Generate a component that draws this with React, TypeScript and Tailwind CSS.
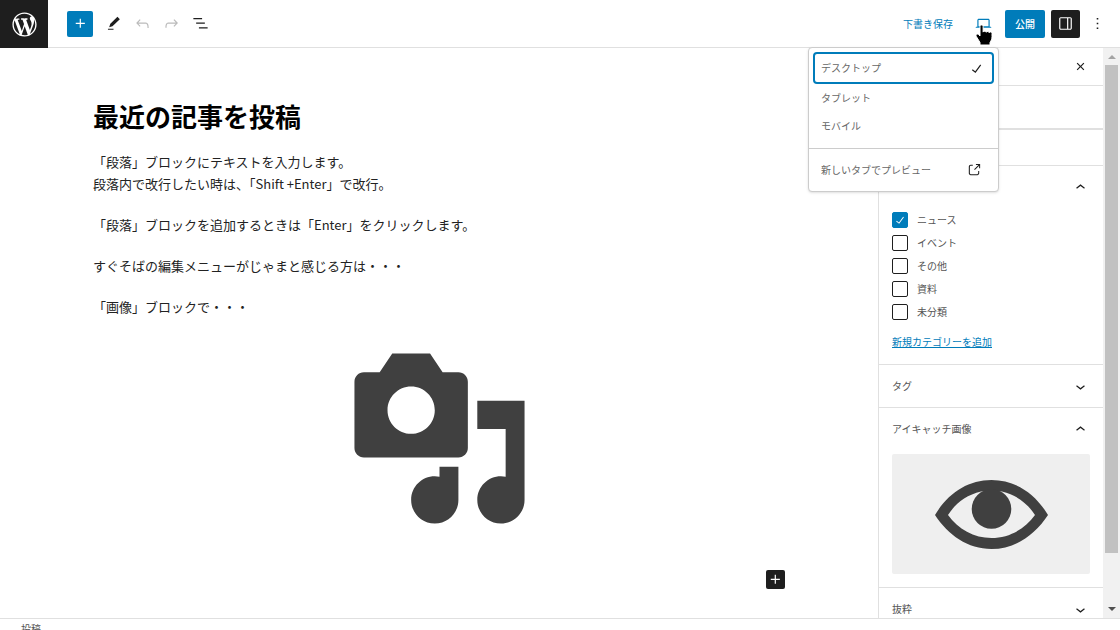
import React from 'react';

const icons = {
  wordpress:
    'M20 10c0-5.51-4.49-10-10-10C4.48 0 0 4.49 0 10c0 5.52 4.48 10 10 10 5.51 0 10-4.48 10-10zM7.78 15.37L4.37 6.22c.55-.02 1.17-.08 1.17-.08.5-.06.44-1.13-.06-1.11 0 0-1.45.11-2.37.11-.18 0-.37 0-.58-.01C4.12 2.69 6.87 1.11 10 1.11c2.33 0 4.45.87 6.05 2.34-.68-.11-1.65.39-1.65 1.58 0 .74.45 1.36.9 2.1.35.61.55 1.36.55 2.46 0 1.49-1.4 5-1.4 5l-3.03-8.37c.54-.02.82-.17.82-.17.5-.05.44-1.25-.06-1.22 0 0-1.44.12-2.38.12-.87 0-2.33-.12-2.33-.12-.5-.03-.56 1.2-.06 1.22l.92.08 1.26 3.41zM17.41 10c.24-.64.74-1.87.43-4.25.7 1.29 1.05 2.71 1.05 4.25 0 3.29-1.73 6.24-4.4 7.78.97-2.59 1.94-5.2 2.92-7.78zM6.1 18.09C3.12 16.65 1.11 13.53 1.11 10c0-1.3.23-2.48.72-3.59C3.25 10.3 4.67 14.2 6.1 18.09zm4.03-6.63l2.58 6.98c-.86.29-1.76.45-2.71.45-.79 0-1.57-.11-2.29-.33.81-2.38 1.62-4.74 2.42-7.1z',
  plus: 'M11 12.5V17.5H12.5V12.5H17.5V11H12.5V6H11V11H6V12.5H11Z',
  edit: 'M20 6.5l-3-3-9 8.8-1.5 4.4 4.2-1.2L20 6.5ZM12 18.5H5V20h7v-1.5Z',
  undo: 'M18.3 11.7c-.6-.6-1.4-.9-2.3-.9H6.7l2.9-3.3-1.1-1-4.5 5L8.5 16l1-1-2.7-2.7H16c.5 0 .9.2 1.3.5 1 1 1 3.4 1 4.5v.3h1.5v-.2c0-1.5 0-4.3-1.5-5.7z',
  redo: 'M15.6 6.5l-1.1 1 2.9 3.3H8c-.9 0-1.7.3-2.3.9-1.4 1.5-1.4 4.2-1.4 5.6v.2h1.5v-.3c0-1.1 0-3.5 1-4.5.3-.3.7-.5 1.3-.5h9.2L14.5 15l1.1 1.1 4.6-4.6-4.6-5z',
  listView: 'M3 5h11v1.6H3V5Zm3.5 5.7h11v1.6h-11v-1.6ZM21 16.6H10v1.6h11v-1.6Z',
  laptop:
    'M20.5 16h-.7V8c0-1.1-.9-2-2-2H6.2c-1.1 0-2 .9-2 2v8h-.7c-.8 0-1.5.7-1.5 1.5h20c0-.8-.7-1.5-1.5-1.5zM5.7 8c0-.3.2-.5.5-.5h11.6c.3 0 .5.2.5.5v7.6H5.7V8z',
  drawer:
    'M18 4H6c-1.1 0-2 .9-2 2v12c0 1.1.9 2 2 2h12c1.1 0 2-.9 2-2V6c0-1.1-.9-2-2-2zm-4 14.5H6c-.3 0-.5-.2-.5-.5V6c0-.3.2-.5.5-.5h8v13zm4.5-.5c0 .3-.2.5-.5.5h-2.5v-13H18c.3 0 .5.2.5.5v12z',
  more: 'M13 19h-2v-2h2v2zm0-6h-2v-2h2v2zm0-6h-2V5h2v2z',
  check: 'M16.7 7.1l-6.3 8.5-3.3-2.5-.9 1.2 4.5 3.4L17.9 8z',
  external:
    'M18.2 17c0 .7-.6 1.2-1.2 1.2H7c-.7 0-1.2-.6-1.2-1.2V7c0-.7.6-1.2 1.2-1.2h3.2V4.2H7C5.5 4.2 4.2 5.5 4.2 7v10c0 1.5 1.2 2.8 2.8 2.8h10c1.5 0 2.8-1.2 2.8-2.8v-3.6h-1.5V17zM14.9 3v1.5h3.7l-6.4 6.4 1.1 1.1 6.4-6.4v3.7h1.5V3h-6.3z',
  close:
    'M12 13.06l3.712 3.713 1.061-1.06L13.061 12l3.712-3.712-1.06-1.06L12 10.938 8.288 7.227l-1.061 1.06L10.939 12l-3.712 3.712 1.06 1.061L12 13.061z',
  down: 'M17.5 11.6L12 16l-5.5-4.4.9-1.2L12 14l4.5-3.6 1 1.2z',
  up: 'M6.5 12.4L12 8l5.5 4.4-.9 1.2L12 10l-4.5 3.6-1-1.2z',
};

interface IconProps {
  name: keyof typeof icons;
  className?: string;
  viewBox?: string;
}

const Icon: React.FC<IconProps> = ({ name, className = 'size-[19px]', viewBox = '0 0 24 24' }) => (
  <svg viewBox={viewBox} className={`shrink-0 fill-current ${className}`} aria-hidden="true">
    <path d={icons[name]} />
  </svg>
);

interface ToolButtonProps {
  icon: keyof typeof icons;
  label: string;
  disabled?: boolean;
}

const ToolButton: React.FC<ToolButtonProps> = ({ icon, label, disabled }) => (
  <button
    aria-label={label}
    disabled={disabled}
    className="flex h-7 w-[29px] items-center justify-center text-[#1e1e1e] disabled:text-[#bbb]"
  >
    <Icon name={icon} />
  </button>
);

const PreviewMenu = () => (
  <div
    role="menu"
    className="absolute top-full right-0 z-10 w-[191px] rounded-sm border border-[#ccc] bg-white text-[#666] shadow-sm"
  >
    <div className="flex flex-col px-1 pt-1 pb-2">
      <button
        role="menuitem"
        className="flex h-8 items-center justify-between rounded-sm px-2 ring-2 ring-[#007cba] ring-inset"
      >
        デスクトップ
        <Icon name="check" className="size-[19px] text-[#1e1e1e]" />
      </button>
      <button role="menuitem" className="h-7 px-2 text-left">タブレット</button>
      <button role="menuitem" className="h-7 px-2 text-left">モバイル</button>
    </div>
    <div className="border-t border-[#ccc] px-1">
      <a href="#preview" role="menuitem" className="flex h-[42px] items-center justify-between pr-3 pl-2">
        新しいタブでプレビュー
        <Icon name="external" className="size-4 text-[#1e1e1e]" />
      </a>
    </div>
  </div>
);

const HandCursor = () => (
  <svg viewBox="0 0 18 24" className="pointer-events-none absolute top-6 left-2 z-20 h-6 w-[18px]" aria-hidden="true">
    <path
      d="M6.5 1C5.500 1 5 1.700 5 2.600V12L3.600 10.600C2.800 9.800 1.500 10 1.100 10.900c-.3.700 0 1.300.4 1.900l3.500 5.700V21h10v-2.600c1.200-1.700 2-3.400 2-5.700v-3.300c0-1.700-2.300-2-2.800-.7-.2-1.500-2.400-1.700-2.900-.4-.4-1.400-2.600-1.500-3.200-.2V2.600C8.100 1.700 7.500 1 6.500 1Z"
      fill="#000"
      stroke="#fff"
      strokeWidth="1"
    />
  </svg>
);

const Header = () => (
  <header className="flex h-12 shrink-0 items-stretch justify-between border-[#e0e0e0] bg-white">
    <a href="#posts" aria-label="投稿一覧" className="flex w-12 shrink-0 items-center justify-center bg-[#1e1e1e] text-white">
      <Icon name="wordpress" viewBox="-2 -2 24 24" className="size-[29px]" />
    </a>
    <div className="flex flex-1 justify-between border-b border-[#e0e0e0] pr-[11px] pl-[19px]">
      <div className="flex items-center">
        <button aria-label="ブロックを追加" className="mr-[6px] flex size-[26px] items-center justify-center rounded-xs bg-[#007cba] text-white">
          <Icon name="plus" />
        </button>
        <ToolButton icon="edit" label="ツール" />
        <ToolButton icon="undo" label="元に戻す" disabled />
        <ToolButton icon="redo" label="やり直す" disabled />
        <ToolButton icon="listView" label="リスト表示" />
      </div>
      <div className="flex items-center gap-[6px]">
        <button className="mr-2 text-[#007cba]">下書き保存</button>
        <div className="relative flex h-full w-8 items-center justify-center text-[#007cba]">
          <button aria-label="プレビュー">
            <Icon name="laptop" />
          </button>
          <PreviewMenu />
          <HandCursor />
        </div>
        <button className="h-7 w-10 rounded-xs bg-[#007cba] font-medium text-white">公開</button>
        <button aria-label="設定" className="flex h-7 w-[29px] items-center justify-center rounded-xs bg-[#1e1e1e] text-white">
          <Icon name="drawer" />
        </button>
        <button aria-label="オプション" className="flex h-7 w-[23px] items-center justify-center text-[#1e1e1e]">
          <Icon name="more" />
        </button>
      </div>
    </div>
  </header>
);

const Editor = () => (
  <main className="min-w-0 flex-1 overflow-hidden px-[93px] pt-[50px]">
    <h1 className="text-[26px] leading-9 font-bold text-black">最近の記事を投稿</h1>
    <div className="mt-[17px] flex flex-col gap-[19px] text-[13px] leading-[22px] text-[#222]">
      <p>
        「段落」ブロックにテキストを入力します。
        <br />
        段落内で改行したい時は、「Shift +Enter」で改行。
      </p>
      <p>「段落」ブロックを追加するときは「Enter」をクリックします。</p>
      <p>すぐそばの編集メニューがじゃまと感じる方は・・・</p>
      <p>「画像」ブロックで・・・</p>
    </div>
    <figure className="mt-[26px] flex justify-center">
      <svg viewBox="0 0 20 20" className="size-[189px] fill-[#404040]" role="img" aria-label="メディア">
        <path d="M13 11V4c0-.55-.45-1-1-1h-1.670L9 1H5L3.670 3H2c-.55 0-1 .45-1 1v7c0 .55.45 1 1 1h10c.55 0 1-.45 1-1zM7 4.500c1.380 0 2.500 1.120 2.500 2.500S8.380 9.500 7 9.500 4.500 8.380 4.500 7 5.620 4.500 7 4.500zM14 6h5v10.500c0 1.380-1.120 2.500-2.500 2.500S14 17.880 14 16.500s1.120-2.500 2.500-2.500c.17 0 .34.02.5.05V9h-3V6zm-4 8.050V13h2v3.500c0 1.380-1.120 2.500-2.500 2.500S7 17.880 7 16.500 8.120 14 9.500 14c.17 0 .34.02.5.05z" />
      </svg>
    </figure>
    <div className="mt-[37px] flex justify-end">
      <button aria-label="ブロックを追加" className="flex size-[19px] items-center justify-center rounded-xs bg-[#1e1e1e] text-white">
        <Icon name="plus" />
      </button>
    </div>
  </main>
);

interface PanelProps {
  title: string;
  open?: boolean;
  children?: React.ReactNode;
}

const Panel: React.FC<PanelProps> = ({ title, open, children }) => (
  <section className="shrink-0 border-b border-[#e0e0e0]">
    <h2>
      <button aria-expanded={!!open} className="flex h-[42px] w-full items-center justify-between pr-[13px] pl-[13px]">
        {title}
        <Icon name={open ? 'up' : 'down'} className="size-[19px] text-[#1e1e1e]" />
      </button>
    </h2>
    {children}
  </section>
);

const categories = [
  { id: 'news', label: 'ニュース', checked: true },
  { id: 'event', label: 'イベント', checked: false },
  { id: 'other', label: 'その他', checked: false },
  { id: 'docs', label: '資料', checked: false },
  { id: 'none', label: '未分類', checked: false },
];

const Sidebar = () => (
  <aside className="flex w-[242px] shrink-0 border-l border-[#e0e0e0] text-[#555]">
    <div className="flex flex-1 flex-col overflow-hidden">
      <div className="flex h-[38px] shrink-0 items-center justify-end border-b border-[#e0e0e0] pr-[13px]">
        <button aria-label="設定を閉じる" className="text-[#1e1e1e]">
          <Icon name="close" />
        </button>
      </div>
      <Panel title="" />
      <div className="h-[37px] shrink-0 border-y border-[#e0e0e0]" />
      <Panel title="カテゴリー" open>
        <div className="flex flex-col gap-[7px] px-[13px] pt-1">
          {categories.map((c) => (
            <label key={c.id} htmlFor={c.id} className="flex h-4 items-center gap-[9px]">
              <span className="relative size-4">
                <input
                  type="checkbox"
                  id={c.id}
                  defaultChecked={c.checked}
                  className="peer block size-4 appearance-none rounded-xs border border-[#1e1e1e] bg-white checked:border-[#007cba] checked:bg-[#007cba]"
                />
                <Icon name="check" className="pointer-events-none absolute inset-0 hidden size-4 text-white peer-checked:block" />
              </span>
              {c.label}
            </label>
          ))}
        </div>
        <div className="px-[13px] pt-3 pb-3">
          <a href="#new-category" className="block leading-5 text-[#007cba] underline">新規カテゴリーを追加</a>
        </div>
      </Panel>
      <Panel title="タグ" />
      <Panel title="アイキャッチ画像" open>
        <div className="px-[13px] pt-1 pb-[13px]">
          <button aria-label="アイキャッチ画像を置換" className="flex h-[120px] w-full items-center justify-center rounded-xs bg-[#efefef]">
            <svg viewBox="0 0 113 69" className="h-[69px] w-[113px] fill-[#404040]">
              <path
                fillRule="evenodd"
                d="M0 35C13 13 33 0 56.500 0S100 13 113 35C100 55 80 69 56.500 69S13 55 0 35ZM13 35C23 49 39 58 56.500 58S90 49 100 35C93 24 82 15 67 11.500H46C31 15 20 24 13 35Z"
              />
              <circle cx="56.500" cy="29" r="19.800" />
            </svg>
          </button>
        </div>
      </Panel>
      <Panel title="抜粋" />
    </div>
    <div className="flex w-[17px] shrink-0 flex-col items-center bg-[#f1f1f1]" aria-hidden="true">
      <svg viewBox="0 0 17 17" className="size-[17px] shrink-0 fill-[#a3a3a3]">
        <path d="M5 11h8L9 7Z" />
      </svg>
      <div className="w-full flex-1 px-[2px]">
        <div className="h-[91%] bg-[#c1c1c1]" />
      </div>
      <svg viewBox="0 0 17 17" className="size-[17px] shrink-0 fill-[#505050]">
        <path d="M5 6h8l-4 4Z" />
      </svg>
    </div>
  </aside>
);

const App = () => (
  <div className="flex h-screen flex-col overflow-hidden bg-white font-['Noto_Sans_CJK_JP',sans-serif] text-[10px] leading-4">
    <Header />
    <div className="flex min-h-0 flex-1">
      <Editor />
      <Sidebar />
    </div>
    <footer className="h-3 shrink-0 overflow-hidden border-t border-[#e0e0e0] px-[21px] pt-[2px] text-[#555]">投稿</footer>
  </div>
);

export default App;
